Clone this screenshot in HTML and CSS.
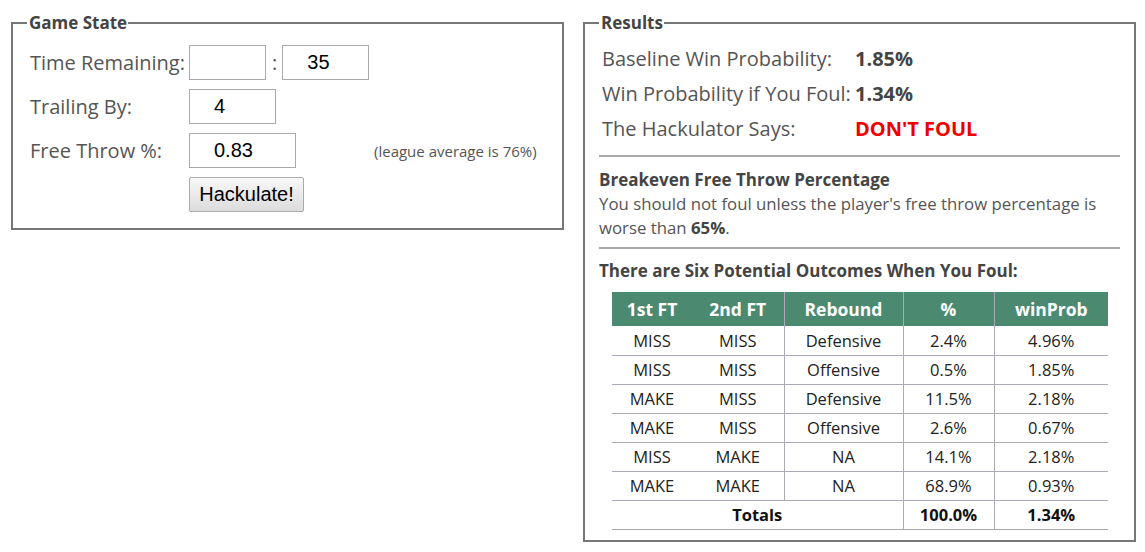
FILE: index.html
```html
<!DOCTYPE html>
<html lang="en">
<head>
  <meta charset="UTF-8" />
  <title>The Hackulator</title>
  <link rel="stylesheet" href="styles.css">
</head>
<body>
  <div class="page">
    <fieldset class="box game-box">
      <legend>Game State</legend>
      <div class="form">
        <label>Time Remaining:</label>
        <div class="field">
          <input class="in-min" type="text" value="">
          <span class="colon">:</span>
          <input class="in-sec" type="text" value="35">
        </div>

        <label>Trailing By:</label>
        <div class="field">
          <input class="in-trail" type="text" value="4">
        </div>

        <label>Free Throw %:</label>
        <div class="field">
          <input class="in-ft" type="text" value="0.83">
          <span class="note">(league average is 76%)</span>
        </div>

        <span></span>
        <div class="field">
          <button class="go">Hackulate!</button>
        </div>
      </div>
    </fieldset>

    <fieldset class="box results-box">
      <legend>Results</legend>
      <div class="summary">
        <div>Baseline Win Probability:</div>
        <div class="val">1.85%</div>
        <div>Win Probability if You Foul:</div>
        <div class="val">1.34%</div>
        <div>The Hackulator Says:</div>
        <div class="val verdict">DON'T FOUL</div>
      </div>
      <hr class="rule-top">
      <div class="section-title">Breakeven Free Throw Percentage</div>
      <p class="breakeven">You should not foul unless the player's free throw percentage is worse than <b>65%</b>.</p>
      <hr class="rule-mid">
      <div class="section-title">There are Six Potential Outcomes When You Foul:</div>
      <table class="outcomes">
        <thead>
          <tr><th class="c1">1st FT</th><th class="c2">2nd FT</th><th class="c3">Rebound</th><th class="c4">%</th><th class="c5">winProb</th></tr>
        </thead>
        <tbody>
          <tr><td>MISS</td><td>MISS</td><td class="sep">Defensive</td><td class="sep">2.4%</td><td class="sep">4.96%</td></tr>
          <tr><td>MISS</td><td>MISS</td><td class="sep">Offensive</td><td class="sep">0.5%</td><td class="sep">1.85%</td></tr>
          <tr><td>MAKE</td><td>MISS</td><td class="sep">Defensive</td><td class="sep">11.5%</td><td class="sep">2.18%</td></tr>
          <tr><td>MAKE</td><td>MISS</td><td class="sep">Offensive</td><td class="sep">2.6%</td><td class="sep">0.67%</td></tr>
          <tr><td>MISS</td><td>MAKE</td><td class="sep">NA</td><td class="sep">14.1%</td><td class="sep">2.18%</td></tr>
          <tr><td>MAKE</td><td>MAKE</td><td class="sep">NA</td><td class="sep">68.9%</td><td class="sep">0.93%</td></tr>
          <tr class="totals"><td colspan="3">Totals</td><td class="sep">100.0%</td><td class="sep">1.34%</td></tr>
        </tbody>
      </table>
    </fieldset>
  </div>
</body>
</html>
```

FILE: styles.css
```css
* {
  box-sizing: border-box;
}
html, body {
  margin: 0;
  padding: 0;
  background: #fff;
  color: #444;
  font-family: "Open Sans", Arial, sans-serif;
}
.page {
  display: flex;
  align-items: flex-start;
  gap: 19px;
  padding: 11px 0 0 11px;
}
.box {
  margin: 0;
  width: 553px;
  border: 2px solid #777;
  padding: 0 14px;
}
.box legend {
  padding: 0 1px 0 2px;
  font-size: 17px;
  font-weight: bold;
  line-height: 24px;
  color: #444;
}
.game-box {
  padding-top: 10px;
  padding-bottom: 16px;
}
.form {
  display: grid;
  grid-template-columns: 159px 1fr;
  row-gap: 9px;
  padding-left: 3px;
  align-items: center;
  font-size: 20px;
  color: #555;
}
.field {
  display: flex;
  align-items: center;
}
.field input {
  height: 35px;
  border: 1px solid #aaa;
  font-family: "Liberation Sans", Arial, sans-serif;
  font-size: 20px;
  color: #000;
  padding: 0 0 0 24px;
  margin: 0;
}
.in-min { width: 77px; }
.in-sec { width: 87px; }
.in-trail { width: 87px; }
.in-ft { width: 107px; }
.colon {
  margin: 0 5px 0 6px;
  color: #555;
}
.note {
  margin-left: 78px;
  font-size: 15px;
  color: #555;
}
.go {
  width: 115px;
  height: 35px;
  margin: 0;
  font-family: "Liberation Sans", Arial, sans-serif;
  font-size: 20px;
  color: #000;
  background: linear-gradient(#f8f8f8, #dcdcdc);
  border: 1px solid #aaa;
  border-radius: 2px;
  padding: 0;
}
.results-box {
  padding-top: 6px;
  padding-bottom: 10px;
}
.summary {
  display: grid;
  grid-template-columns: 253px 1fr;
  padding-left: 3px;
  font-size: 20px;
  line-height: 35px;
  color: #555;
}
.summary .val {
  font-weight: bold;
  color: #444;
}
.summary .verdict {
  color: #ee0000;
}
.results-box hr {
  border: none;
  border-top: 2px solid #aaa;
}
.rule-top {
  margin: 9px 0 11px;
}
.rule-mid {
  margin: 7px 0 10px;
}
.section-title {
  font-size: 17px;
  font-weight: bold;
  line-height: 24px;
  color: #444;
}
.breakeven {
  margin: 0;
  font-size: 16.8px;
  line-height: 24px;
  color: #555;
}
.breakeven b {
  color: #444;
}
.outcomes {
  width: 496px;
  margin: 9px 0 0 13px;
  border-collapse: collapse;
  font-size: 16.5px;
  color: #222;
  text-align: center;
}
.outcomes th {
  background: #4b8a71;
  color: #fff;
  font-size: 17.5px;
  height: 34px;
  padding: 0;
}
.outcomes th.c3, .outcomes th.c4, .outcomes th.c5 {
  border-left: 1px solid #a9a9b8;
}
.c1 { width: 80px; }
.c2 { width: 92px; }
.c3 { width: 119px; }
.c4 { width: 91px; }
.c5 { width: 114px; }
.outcomes td {
  height: 29px;
  padding: 0;
  border-bottom: 1px solid #a9a9b8;
}
.outcomes td.sep {
  border-left: 1px solid #a9a9b8;
}
.totals td {
  font-weight: bold;
  color: #111;
}
```
